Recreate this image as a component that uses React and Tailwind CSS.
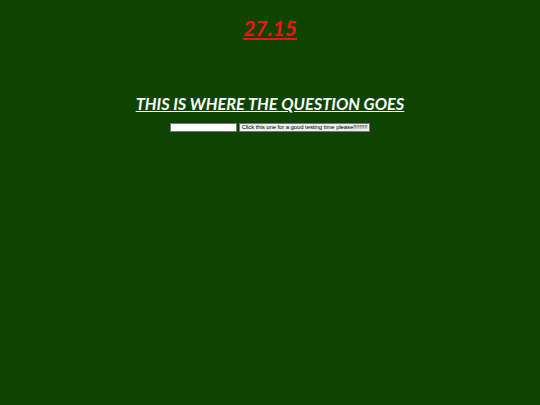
export default function App() {
  return (
    <div className="min-h-[405px] w-full bg-[#0e4400] flex flex-col items-center font-['Lato','Comic_Sans_MS',sans-serif]">
      <h1 className="mt-[15px] text-[21px] leading-[26px] font-bold italic underline text-[#ff1010]">
        27.15
      </h1>
      <h2 className="mt-[53px] text-[16.4px] leading-[20px] font-bold italic underline text-white">
        THIS IS WHERE THE QUESTION GOES
      </h2>
      <div className="mt-[9px] flex items-center gap-[2px] font-['Liberation_Sans',sans-serif]">
        <input
          type="text"
          className="w-[67px] h-[9px] bg-white border border-[#767676]"
        />
        <button className="h-[9px] px-[2px] bg-[#efefef] border border-[#767676] text-[6px] leading-[7px] text-black tracking-[-0.1px]">
          Click this one for a good testing time please!!!!!!!!!
        </button>
      </div>
    </div>
  );
}
